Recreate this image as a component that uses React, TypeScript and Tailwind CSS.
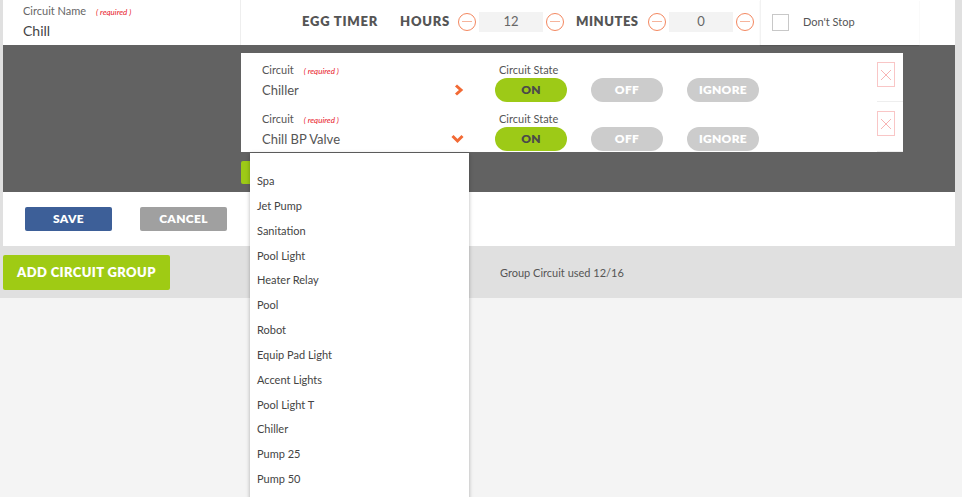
import { useState } from 'react';

const circuitOptions = [
  'Spa',
  'Jet Pump',
  'Sanitation',
  'Pool Light',
  'Heater Relay',
  'Pool',
  'Robot',
  'Equip Pad Light',
  'Accent Lights',
  'Pool Light T',
  'Chiller',
  'Pump 25',
  'Pump 50',
];

function MinusCircle() {
  return (
    <button
      type="button"
      className="grid h-[18px] w-[18px] shrink-0 place-items-center rounded-full border border-[#f3875f] bg-white"
      aria-label="Decrease"
    >
      <span className="block h-px w-[10px] bg-[#f6b49c]" />
    </button>
  );
}

function ChevronRight() {
  return (
    <svg width="10" height="12" viewBox="0 0 10 12" aria-hidden="true">
      <path d="M2 1.5 L7 6 L2 10.5" fill="none" stroke="#f26a35" strokeWidth="3" strokeLinejoin="miter" />
    </svg>
  );
}

function ChevronDown() {
  return (
    <svg width="13" height="10" viewBox="0 0 13 10" aria-hidden="true">
      <path d="M1.5 2 L6.5 7 L11.5 2" fill="none" stroke="#f26a35" strokeWidth="3" strokeLinejoin="miter" />
    </svg>
  );
}

function CloseBox() {
  return (
    <button
      type="button"
      className="grid h-[25px] w-[18px] place-items-center border border-[#f9c6c6] bg-white"
      aria-label="Remove circuit"
    >
      <svg width="12" height="12" viewBox="0 0 12 12" aria-hidden="true">
        <path d="M1 1 L11 11 M11 1 L1 11" stroke="#f8b4b4" strokeWidth="1" />
      </svg>
    </button>
  );
}

function Required() {
  return <span className="ml-[10px] text-[8px] italic text-[#e8202a]">( required )</span>;
}

type RowProps = { name: string; open: boolean; tall?: boolean };

function CircuitRow({ name, open, tall }: RowProps) {
  return (
    <div className={`flex items-stretch ${tall ? 'h-[50px]' : 'h-[49px]'}`}>
      <div className="flex w-[236px] flex-col pl-[21px] pt-[10px]">
        <div className="flex items-baseline text-[11px] leading-[14px] text-[#555]">
          Circuit
          <Required />
        </div>
        <div className="mt-[4px] flex items-center justify-between pr-[13px]">
          <span className="text-[13px] leading-[16px] text-[#555]">{name}</span>
          {open ? <ChevronDown /> : <ChevronRight />}
        </div>
      </div>
      <div className="flex flex-col pl-[18px] pt-[10px]">
        <div className="pl-[4px] text-[11px] leading-[14px] text-[#555]">Circuit State</div>
        <div className="mt-[1px] flex gap-[24px]">
          <button
            type="button"
            className="h-[24px] w-[72px] rounded-full bg-[#9dca17] text-[12px] font-extrabold tracking-wide text-[#4a4a4a]"
          >
            ON
          </button>
          <button
            type="button"
            className="h-[24px] w-[72px] rounded-full bg-[#cccccc] text-[12px] font-extrabold tracking-wide text-white"
          >
            OFF
          </button>
          <button
            type="button"
            className="h-[24px] w-[72px] rounded-full bg-[#cccccc] text-[12px] font-extrabold tracking-wide text-white"
          >
            IGNORE
          </button>
        </div>
      </div>
      <div className="ml-auto flex w-[26px] items-start border-b border-[#eeeeee] pt-[9px]">
        <CloseBox />
      </div>
    </div>
  );
}

export default function App() {
  const [dontStop, setDontStop] = useState(false);

  return (
    <div className="relative min-h-screen bg-[#f4f4f4] font-['Lato','Liberation_Sans',sans-serif] text-[#555]">
      <div className="bg-[#e0e0e0] pl-[3px] pr-[7px]">
        <div className="bg-white">
          {/* header row */}
          <div className="flex h-[45px]">
            <div className="w-[238px] border-r border-[#eeeeee] pl-[20px] pt-[4px]">
              <div className="flex items-baseline text-[11px] leading-[14px] text-[#666]">
                Circuit Name
                <Required />
              </div>
              <div className="mt-[3px] text-[14px] leading-[18px] text-[#444]">Chill</div>
            </div>
            <div className="flex items-center pb-[2px] pl-[61px]">
              <span className="w-[98px] text-[13px] font-extrabold tracking-[0.06em] text-[#555]">EGG TIMER</span>
              <span className="w-[58px] text-[13px] font-extrabold tracking-[0.06em] text-[#555]">HOURS</span>
              <MinusCircle />
              <div className="mx-[3px] flex h-[20px] w-[64px] items-center justify-center bg-[#f3f3f3] text-[13px] text-[#666]">
                12
              </div>
              <MinusCircle />
              <span className="ml-[12px] w-[72px] text-[13px] font-extrabold tracking-[0.04em] text-[#555]">MINUTES</span>
              <MinusCircle />
              <div className="mx-[3px] flex h-[20px] w-[64px] items-center justify-center bg-[#f3f3f3] text-[13px] text-[#666]">
                0
              </div>
              <MinusCircle />
            </div>
            <div className="ml-[6px] flex h-[45px] w-[159px] items-center border-l border-[#f2f2f2] pl-[11px] shadow-[0_1px_1px_rgba(0,0,0,0.12)]">
              <button
                type="button"
                onClick={() => setDontStop(!dontStop)}
                className="h-[17px] w-[17px] border border-[#c8c8c8] bg-white"
                aria-label="Don't Stop"
              />
              <span className="ml-[14px] text-[11px] text-[#555]">Don't Stop</span>
            </div>
          </div>

          {/* circuits band */}
          <div className="bg-[#626262] pb-[8px] pl-[238px] pt-[8px]">
            <div className="w-[662px] bg-white">
              <CircuitRow name="Chiller" open={false} />
              <CircuitRow name="Chill BP Valve" open tall />
            </div>
            <button
              type="button"
              className="mt-[9px] block h-[23px] w-[120px] rounded-[2px] bg-[#9dca17]"
              aria-label="Add circuit"
            />
          </div>

          {/* actions */}
          <div className="flex h-[54px] items-start gap-[28px] pl-[22px] pt-[15px]">
            <button
              type="button"
              className="h-[24px] w-[87px] rounded-[2px] bg-[#3d5f98] text-[12px] font-extrabold tracking-wide text-white"
            >
              SAVE
            </button>
            <button
              type="button"
              className="h-[24px] w-[87px] rounded-[2px] bg-[#a0a0a0] text-[12px] font-extrabold tracking-wide text-white"
            >
              CANCEL
            </button>
          </div>
        </div>

        {/* footer band */}
        <div className="-ml-[3px] flex h-[52px] items-start pl-[3px] pt-[9px]">
          <button
            type="button"
            className="h-[35px] w-[167px] rounded-[2px] bg-[#9fcb14] text-[13px] font-extrabold tracking-[0.03em] text-white"
          >
            ADD CIRCUIT GROUP
          </button>
          <span className="ml-[330px] mt-[10px] text-[11px] text-[#555]">Group Circuit used 12/16</span>
        </div>
      </div>

      {/* open circuit dropdown */}
      <div className="absolute left-[250px] top-[153px] h-[360px] w-[219px] bg-white pt-[16px] shadow-[0_1px_4px_rgba(0,0,0,0.3)]">
        {circuitOptions.map((opt) => (
          <div key={opt} className="h-[24.85px] pl-[7px] text-[11px] leading-[24px] text-[#444]">
            {opt}
          </div>
        ))}
      </div>
    </div>
  );
}
